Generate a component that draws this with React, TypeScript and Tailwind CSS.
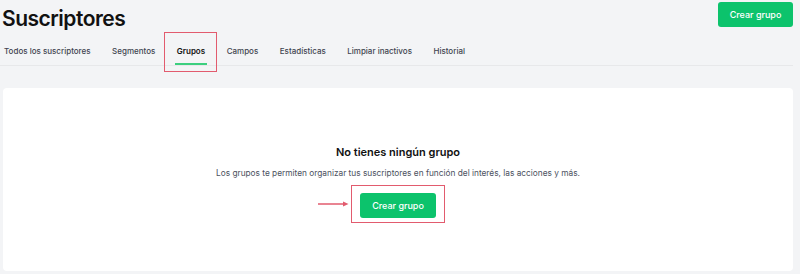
export default function App() {
  const tabs = [
    'Todos los suscriptores',
    'Segmentos',
    'Grupos',
    'Campos',
    'Estadísticas',
    'Limpiar inactivos',
    'Historial',
  ];

  return (
    <div className="h-[274px] w-full overflow-hidden bg-[#f3f4f6] pr-[7px] font-['Inter',sans-serif]">
      {/* Header */}
      <div className="flex items-start justify-between pl-[2px] pt-[2px]">
        <h1 className="mt-[3px] text-[21px] font-semibold leading-[28px] tracking-[-0.5px] text-[#111111]">
          Suscriptores
        </h1>
        <button className="h-[25px] w-[75px] rounded-[3px] bg-[#0cc36c] text-[9px] font-medium text-white">
          Crear grupo
        </button>
      </div>

      {/* Tabs */}
      <nav className="mt-[4px] flex h-[29px] items-center gap-[21.5px] border-b border-[#e7e8ea] pl-[4px]">
        {tabs.map((t) => {
          const active = t === 'Grupos';
          return (
            <div key={t} className="relative flex h-full items-center">
              <span
                className={
                  active
                    ? 'text-[8px] font-semibold text-[#111111]'
                    : 'text-[8px] font-medium text-[#3f4450]'
                }
              >
                {t}
              </span>
              {active && (
                <>
                  <span className="absolute -left-[2px] -right-[2px] bottom-[0px] h-[2px] bg-[#3ccf7f]" />
                  <span className="absolute -left-[13px] -right-[12px] -top-[5px] -bottom-[7px] border-[1.5px] border-[#e25b6e]" />
                </>
              )}
            </div>
          );
        })}
      </nav>

      {/* Empty state card */}
      <div className="ml-[3px] mt-[22px] flex h-[183px] flex-col items-center rounded-[4px] bg-white pt-[56px]">
        <h2 className="text-[11px] font-semibold leading-[16px] text-[#111111]">
          No tienes ningún grupo
        </h2>
        <p className="mt-[6px] text-[8.3px] leading-[14px] text-[#4b5160]">
          Los grupos te permiten organizar tus suscriptores en función del interés, las acciones y más.
        </p>
        <div className="relative mt-[5px] border-[1.5px] border-[#e25b6e] px-[8px] pb-[4px] pt-[5px]">
          <svg
            className="absolute -left-[34px] top-[15px]"
            width="31"
            height="6"
            viewBox="0 0 31 6"
          >
            <line x1="0" y1="3" x2="27" y2="3" stroke="#e25b6e" strokeWidth="1.5" />
            <path d="M25 0.5 L30.5 3 L25 5.5 Z" fill="#e25b6e" />
          </svg>
          <button className="h-[25px] w-[76px] rounded-[3px] bg-[#0cc36c] text-[9px] font-medium text-white">
            Crear grupo
          </button>
        </div>
      </div>
    </div>
  );
}
